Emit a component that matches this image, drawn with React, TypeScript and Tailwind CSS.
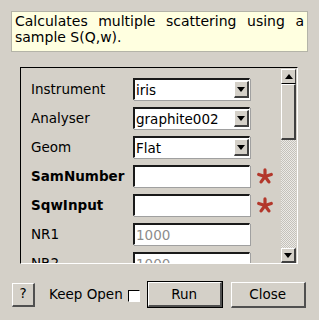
import React from 'react';

const rows: { label: string; kind: 'combo' | 'entry'; value?: string; bold?: boolean; required?: boolean; muted?: boolean }[] = [
  { label: 'Instrument', kind: 'combo', value: 'iris' },
  { label: 'Analyser', kind: 'combo', value: 'graphite002' },
  { label: 'Geom', kind: 'combo', value: 'Flat' },
  { label: 'SamNumber', kind: 'entry', bold: true, required: true },
  { label: 'SqwInput', kind: 'entry', bold: true, required: true },
  { label: 'NR1', kind: 'entry', value: '1000', muted: true },
  { label: 'NR2', kind: 'entry', value: '1000', muted: true },
];

const Tri = ({ up }: { up?: boolean }) => (
  <svg width="8" height="5" viewBox="0 0 8 5">
    <path d={up ? 'M0 5 L4 0 L8 5 Z' : 'M0 0 L8 0 L4 5 Z'} fill="#000" />
  </svg>
);

// red required-field star, five rounded arms
const Star = () => (
  <svg width="16" height="16" viewBox="0 0 16 16">
    {[-90, -18, 54, 126, 198].map(a => {
      const r = (a * Math.PI) / 180;
      return (
        <line key={a} x1="8" y1="8.5" x2={8 + Math.cos(r) * 6.6} y2={8.5 + Math.sin(r) * 6.6}
          stroke="#b3372b" strokeWidth="3.2" strokeLinecap="round" />
      );
    })}
  </svg>
);

const App: React.FC = () => {
  return (
    <div className="w-[319px] h-[320px] bg-[#d4d0c8] flex flex-col overflow-hidden text-black text-[13.5px] font-['DejaVu_Sans',sans-serif]">
      {/* description */}
      <div className="mx-[11px] mt-[11px] h-[41px] bg-[#ffffe0] border border-[#b4b4a8] px-[3px] pt-[1px]">
        <p className="leading-[16px] text-[14px] text-justify">Calculates multiple scattering using a sample S(Q,w).</p>
      </div>

      {/* scrolled form */}
      <div className="ml-[20px] mt-[15px] w-[278px] h-[197px] flex border border-t-black border-l-black border-b-white border-r-white">
        <div className="flex-1 overflow-hidden pt-[10px] pl-[10px] flex flex-col gap-[7px]">
          {rows.map(r => (
            <div key={r.label} className="flex items-center h-[22px] shrink-0">
              <span className={`w-[102px] ${r.bold ? 'font-bold' : ''}`}>{r.label}</span>
              <div className="w-[117px] h-[22px] bg-white border-t-2 border-l-2 border-b border-r border-t-[#1a1a1a] border-l-[#1a1a1a] border-b-white border-r-white flex items-center pl-[1px] shadow-[1px_1px_0_#a0a0a0]">
                <span className={`flex-1 leading-[18px] ${r.muted ? 'text-[#8c8c8c]' : ''}`}>{r.value}</span>
                {r.kind === 'combo' && (
                  <div className="w-[15px] h-[17px] bg-[#d4d0c8] border-t border-l border-white border-b-2 border-r-2 border-b-[#404040] border-r-[#404040] flex items-center justify-center">
                    <Tri />
                  </div>
                )}
              </div>
              {r.required && (
                <span className="ml-[7px] flex items-center">
                  <Star />
                </span>
              )}
            </div>
          ))}
        </div>

        {/* scrollbar */}
        <div className="w-[16px] flex flex-col pt-[1px]">
          <div className="h-[15px] w-[15px] border-t border-l border-white border-b border-r border-b-black border-r-[#404040] flex items-center justify-center">
            <Tri up />
          </div>
          <div className="h-[56px] w-[15px] border-t border-l border-white border-b-2 border-r-2 border-b-[#404040] border-r-[#404040]" />
          <div className="flex-1 w-[15px] bg-[repeating-conic-gradient(#c4c1ba_0_25%,#eceae6_0_50%)] bg-[length:2px_2px]" />
          <div className="h-[15px] w-[15px] border-t border-l border-white border-b-2 border-r-2 border-b-[#404040] border-r-[#404040] flex items-center justify-center">
            <Tri />
          </div>
        </div>
      </div>

      {/* buttons */}
      <div className="mt-[17px] flex items-center h-[27px]">
        <button className="ml-[12px] w-[23px] h-[24px] border-t border-l border-white border-b-2 border-r-2 border-b-[#505050] border-r-[#505050] leading-none">?</button>
        <span className="ml-[14px]">Keep Open</span>
        <span className="ml-[5px] w-[12px] h-[12px] bg-white border-t border-l border-black border-b border-r border-b-white border-r-white mt-[2px]" />
        <button className="ml-[7px] w-[76px] h-[27px] border border-black">
          <div className="w-full h-full border-t border-l border-white border-b-2 border-r-2 border-b-[#505050] border-r-[#505050] flex items-center justify-center">Run</div>
        </button>
        <button className="ml-[8px] w-[75px] h-[26px] border-t border-l border-white border-b-2 border-r-2 border-b-[#505050] border-r-[#505050] flex items-center justify-center">Close</button>
      </div>
    </div>
  );
};

export default App;
